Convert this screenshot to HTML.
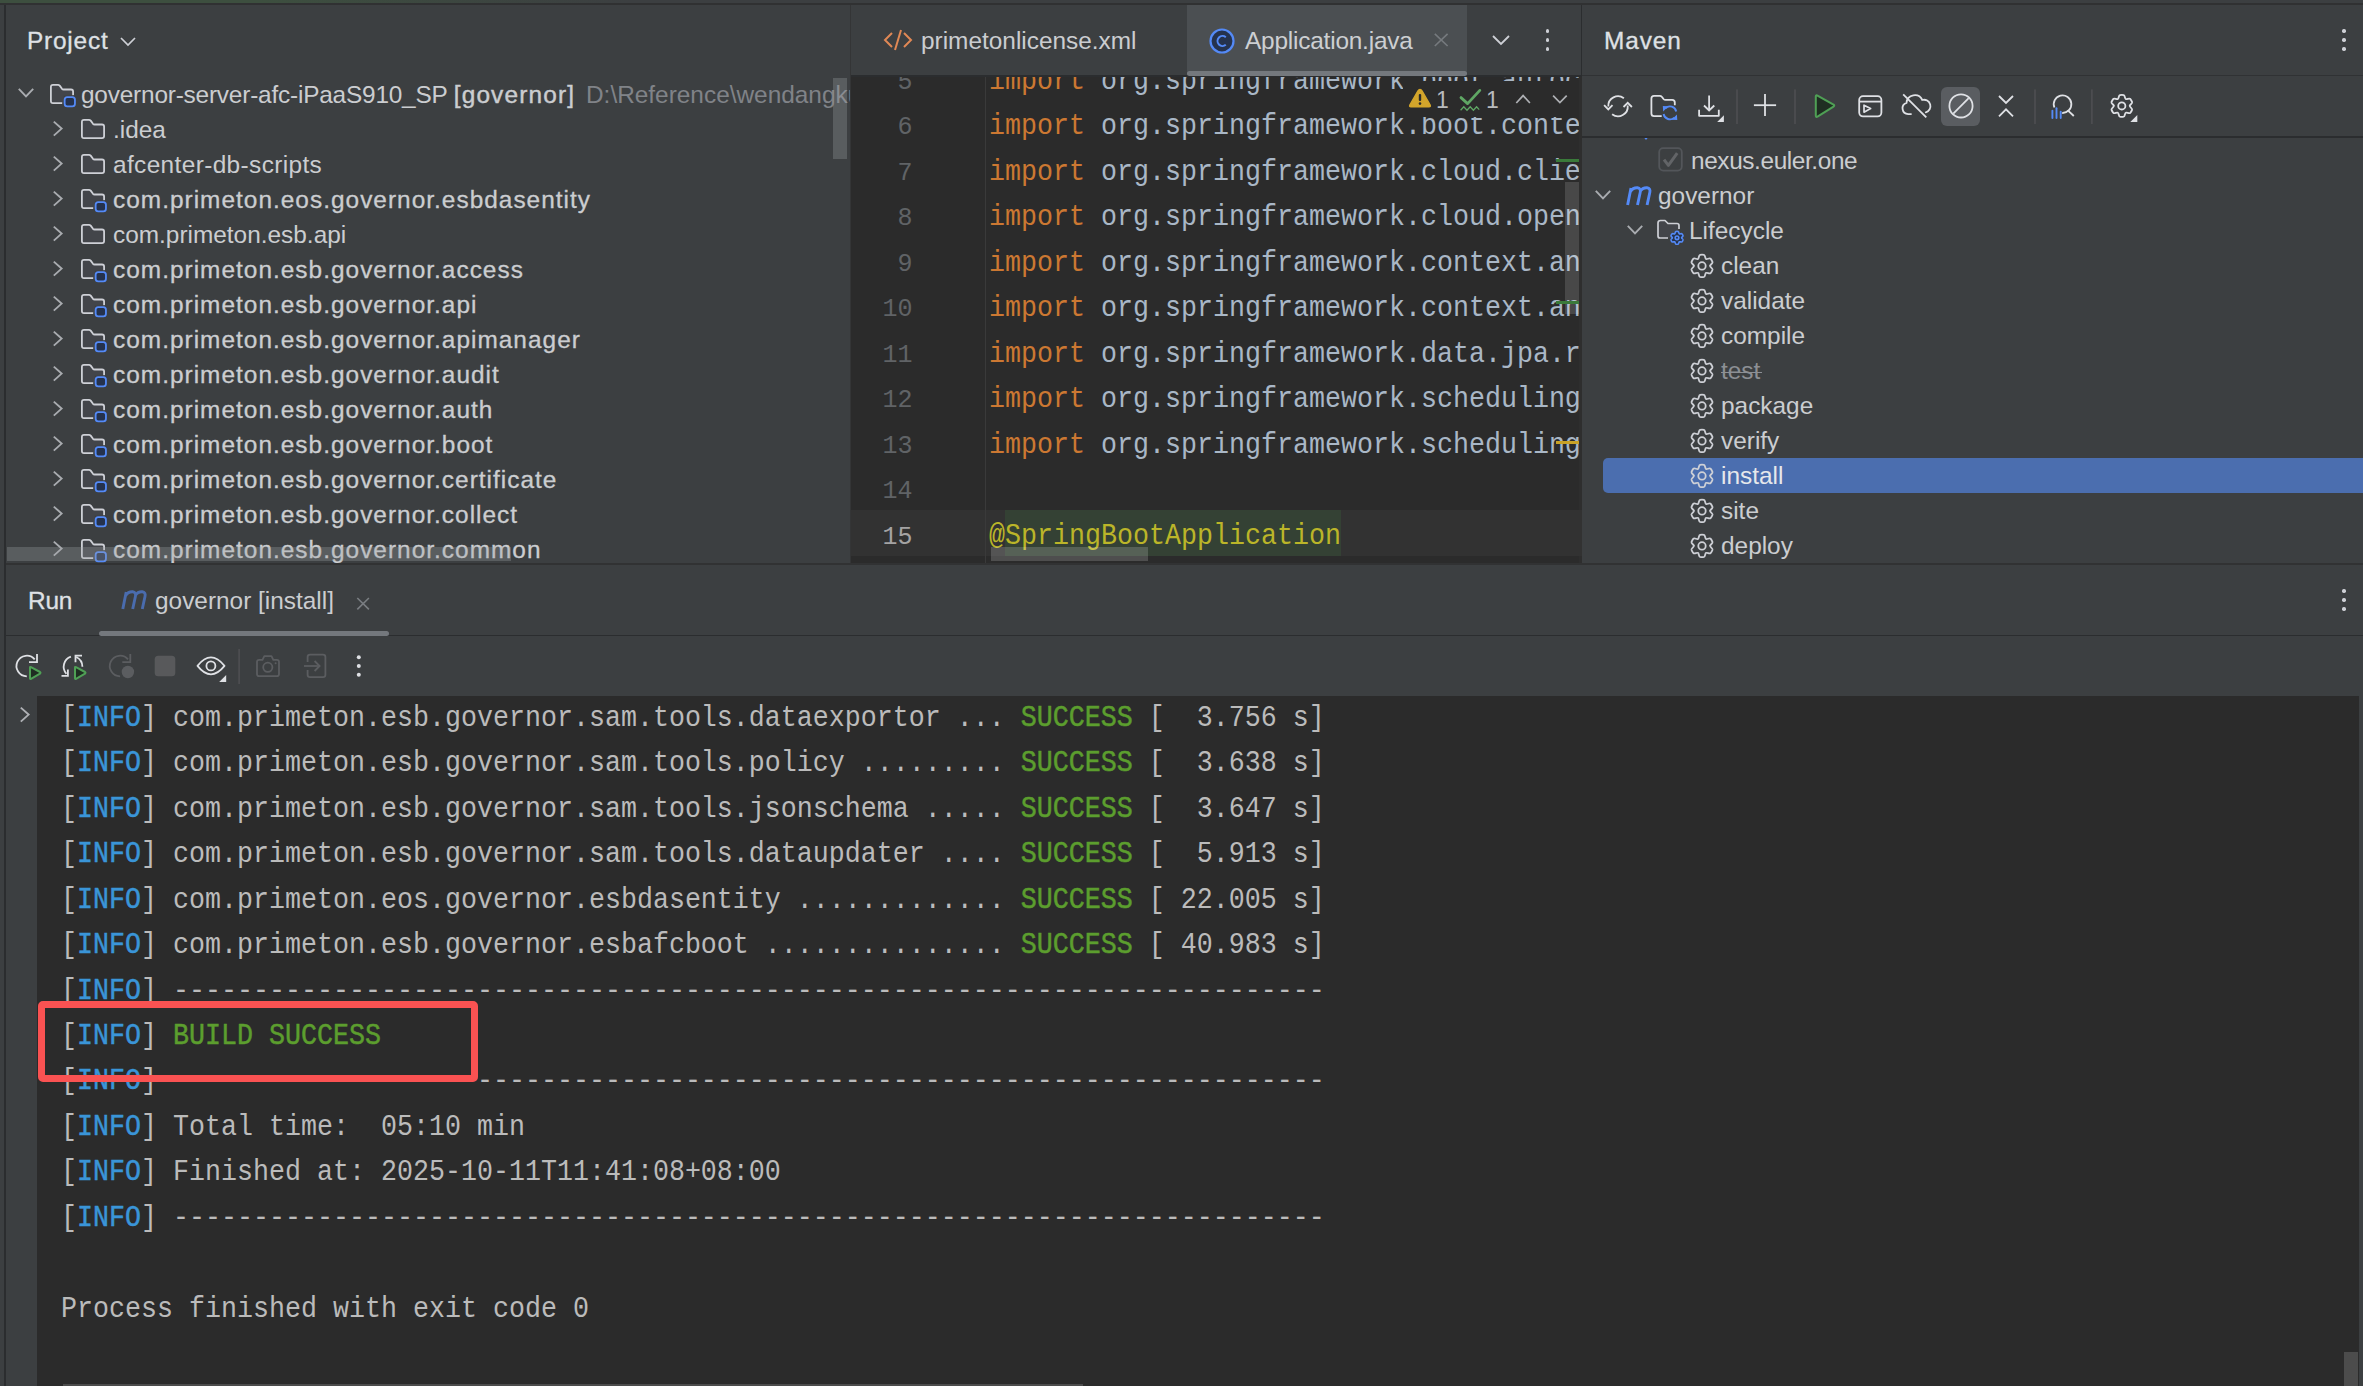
<!DOCTYPE html><html><head><meta charset="utf-8"><style>
html,body{margin:0;padding:0;}
body{width:2363px;height:1386px;overflow:hidden;position:relative;background:#3C3F41;font-family:'Liberation Sans', sans-serif;}
</style></head><body>
<div style="position:absolute;left:0px;top:0px;width:2363px;height:3px;background:#3C3F41;background:linear-gradient(to right, #3D4F3F 0px, #3D4F3F 260px, #3C3F41 630px);"></div>
<div style="position:absolute;left:0px;top:3px;width:2363px;height:1.6px;background:#303132;"></div>
<div style="position:absolute;left:4px;top:5px;width:2px;height:1381px;background:#2B2D2F;"></div>
<div style="position:absolute;left:27px;top:24.54px;line-height:32px;font-family:'Liberation Sans', sans-serif;font-size:24.4px;font-weight:400;color:#DFE1E5;white-space:pre;letter-spacing:0.8px;-webkit-text-stroke:0.3px #DFE1E5;">Project</div>
<svg style="position:absolute;left:118px;top:34px;" width="20" height="14" viewBox="0 0 20 14" fill="none"><polyline points="3,4 10,11 17,4" stroke="#CED0D6" stroke-width="1.7" fill="none"/></svg>
<div style="position:absolute;left:6px;top:77px;width:844px;height:486px;overflow:hidden;">
<svg style="position:absolute;left:10.5px;top:9px;" width="18" height="14" viewBox="0 0 18 14" fill="none"><polyline points="1.8,2.8 9,10.4 16.2,2.8" stroke="#A9ACB0" stroke-width="1.9" fill="none"/></svg>
<svg style="position:absolute;left:44px;top:7px;" width="28" height="26" viewBox="0 0 28 26" fill="none"><path d="M0.9,3 Q0.9,0.9 3,0.9 L8,0.9 Q9,0.9 9.7,1.6 L12,4.8 Q12.6,5.5 13.6,5.5 L21,5.5 Q23.1,5.5 23.1,7.6 L23.1,17 Q23.1,19.1 21,19.1 L3,19.1 Q0.9,19.1 0.9,17 Z" fill="#43454A"/><path d="M12.2,19.1 L3,19.1 Q0.9,19.1 0.9,17 L0.9,3 Q0.9,0.9 3,0.9 L8,0.9 Q9,0.9 9.7,1.6 L12,4.8 Q12.6,5.5 13.6,5.5 L21,5.5 Q23.1,5.5 23.1,7.6 L23.1,11.3" fill="none" stroke="#CED0D6" stroke-width="1.8" stroke-linejoin="round"/><rect x="13.8" y="11.6" width="11.6" height="11.2" fill="#3C3F41"/><rect x="14.65" y="13.05" width="10.3" height="9.4" rx="2.6" fill="#25324D" stroke="#548AF7" stroke-width="1.8"/></svg>
<div style="position:absolute;left:75px;top:1.54px;line-height:32px;font-family:'Liberation Sans', sans-serif;font-size:24.4px;font-weight:400;color:#CBCDD0;white-space:pre;"><span style="letter-spacing:-0.2px">governor-server-afc-iPaaS910_SP </span><span style="letter-spacing:1.15px;-webkit-text-stroke:0.45px #CBCDD0">[governor]</span></div>
<div style="position:absolute;left:580px;top:1.54px;line-height:32px;font-family:'Liberation Sans', sans-serif;font-size:24.4px;font-weight:400;color:#808388;white-space:pre;">D:\Reference\wendangku\governor</div>
<svg style="position:absolute;left:44.5px;top:42px;" width="14" height="20" viewBox="0 0 14 20" fill="none"><polyline points="2.8,2.6 10.6,9.6 2.8,16.6" stroke="#A9ACB0" stroke-width="1.9" fill="none"/></svg>
<svg style="position:absolute;left:75px;top:42px;" width="26" height="22" viewBox="0 0 26 22" fill="none"><path d="M0.9,3 Q0.9,0.9 3,0.9 L8,0.9 Q9,0.9 9.7,1.6 L12,4.8 Q12.6,5.5 13.6,5.5 L21,5.5 Q23.1,5.5 23.1,7.6 L23.1,17 Q23.1,19.1 21,19.1 L3,19.1 Q0.9,19.1 0.9,17 Z" fill="#43454A" stroke="#CED0D6" stroke-width="1.8" stroke-linejoin="round"/></svg>
<div style="position:absolute;left:107px;top:36.54px;line-height:32px;font-family:'Liberation Sans', sans-serif;font-size:24.4px;font-weight:400;color:#CBCDD0;white-space:pre;">.idea</div>
<svg style="position:absolute;left:44.5px;top:77px;" width="14" height="20" viewBox="0 0 14 20" fill="none"><polyline points="2.8,2.6 10.6,9.6 2.8,16.6" stroke="#A9ACB0" stroke-width="1.9" fill="none"/></svg>
<svg style="position:absolute;left:75px;top:77px;" width="26" height="22" viewBox="0 0 26 22" fill="none"><path d="M0.9,3 Q0.9,0.9 3,0.9 L8,0.9 Q9,0.9 9.7,1.6 L12,4.8 Q12.6,5.5 13.6,5.5 L21,5.5 Q23.1,5.5 23.1,7.6 L23.1,17 Q23.1,19.1 21,19.1 L3,19.1 Q0.9,19.1 0.9,17 Z" fill="#43454A" stroke="#CED0D6" stroke-width="1.8" stroke-linejoin="round"/></svg>
<div style="position:absolute;left:107px;top:71.54px;line-height:32px;font-family:'Liberation Sans', sans-serif;font-size:24.4px;font-weight:400;color:#CBCDD0;white-space:pre;letter-spacing:0.38px;">afcenter-db-scripts</div>
<svg style="position:absolute;left:44.5px;top:112px;" width="14" height="20" viewBox="0 0 14 20" fill="none"><polyline points="2.8,2.6 10.6,9.6 2.8,16.6" stroke="#A9ACB0" stroke-width="1.9" fill="none"/></svg>
<svg style="position:absolute;left:75px;top:112px;" width="28" height="26" viewBox="0 0 28 26" fill="none"><path d="M0.9,3 Q0.9,0.9 3,0.9 L8,0.9 Q9,0.9 9.7,1.6 L12,4.8 Q12.6,5.5 13.6,5.5 L21,5.5 Q23.1,5.5 23.1,7.6 L23.1,17 Q23.1,19.1 21,19.1 L3,19.1 Q0.9,19.1 0.9,17 Z" fill="#43454A"/><path d="M12.2,19.1 L3,19.1 Q0.9,19.1 0.9,17 L0.9,3 Q0.9,0.9 3,0.9 L8,0.9 Q9,0.9 9.7,1.6 L12,4.8 Q12.6,5.5 13.6,5.5 L21,5.5 Q23.1,5.5 23.1,7.6 L23.1,11.3" fill="none" stroke="#CED0D6" stroke-width="1.8" stroke-linejoin="round"/><rect x="13.8" y="11.6" width="11.6" height="11.2" fill="#3C3F41"/><rect x="14.65" y="13.05" width="10.3" height="9.4" rx="2.6" fill="#25324D" stroke="#548AF7" stroke-width="1.8"/></svg>
<div style="position:absolute;left:107px;top:106.54px;line-height:32px;font-family:'Liberation Sans', sans-serif;font-size:24.4px;font-weight:400;color:#CBCDD0;white-space:pre;letter-spacing:1.02px;-webkit-text-stroke:0.32px #CBCDD0;">com.primeton.eos.governor.esbdasentity</div>
<svg style="position:absolute;left:44.5px;top:147px;" width="14" height="20" viewBox="0 0 14 20" fill="none"><polyline points="2.8,2.6 10.6,9.6 2.8,16.6" stroke="#A9ACB0" stroke-width="1.9" fill="none"/></svg>
<svg style="position:absolute;left:75px;top:147px;" width="26" height="22" viewBox="0 0 26 22" fill="none"><path d="M0.9,3 Q0.9,0.9 3,0.9 L8,0.9 Q9,0.9 9.7,1.6 L12,4.8 Q12.6,5.5 13.6,5.5 L21,5.5 Q23.1,5.5 23.1,7.6 L23.1,17 Q23.1,19.1 21,19.1 L3,19.1 Q0.9,19.1 0.9,17 Z" fill="#43454A" stroke="#CED0D6" stroke-width="1.8" stroke-linejoin="round"/></svg>
<div style="position:absolute;left:107px;top:141.54px;line-height:32px;font-family:'Liberation Sans', sans-serif;font-size:24.4px;font-weight:400;color:#CBCDD0;white-space:pre;">com.primeton.esb.api</div>
<svg style="position:absolute;left:44.5px;top:182px;" width="14" height="20" viewBox="0 0 14 20" fill="none"><polyline points="2.8,2.6 10.6,9.6 2.8,16.6" stroke="#A9ACB0" stroke-width="1.9" fill="none"/></svg>
<svg style="position:absolute;left:75px;top:182px;" width="28" height="26" viewBox="0 0 28 26" fill="none"><path d="M0.9,3 Q0.9,0.9 3,0.9 L8,0.9 Q9,0.9 9.7,1.6 L12,4.8 Q12.6,5.5 13.6,5.5 L21,5.5 Q23.1,5.5 23.1,7.6 L23.1,17 Q23.1,19.1 21,19.1 L3,19.1 Q0.9,19.1 0.9,17 Z" fill="#43454A"/><path d="M12.2,19.1 L3,19.1 Q0.9,19.1 0.9,17 L0.9,3 Q0.9,0.9 3,0.9 L8,0.9 Q9,0.9 9.7,1.6 L12,4.8 Q12.6,5.5 13.6,5.5 L21,5.5 Q23.1,5.5 23.1,7.6 L23.1,11.3" fill="none" stroke="#CED0D6" stroke-width="1.8" stroke-linejoin="round"/><rect x="13.8" y="11.6" width="11.6" height="11.2" fill="#3C3F41"/><rect x="14.65" y="13.05" width="10.3" height="9.4" rx="2.6" fill="#25324D" stroke="#548AF7" stroke-width="1.8"/></svg>
<div style="position:absolute;left:107px;top:176.54px;line-height:32px;font-family:'Liberation Sans', sans-serif;font-size:24.4px;font-weight:400;color:#CBCDD0;white-space:pre;letter-spacing:1.02px;-webkit-text-stroke:0.32px #CBCDD0;">com.primeton.esb.governor.access</div>
<svg style="position:absolute;left:44.5px;top:217px;" width="14" height="20" viewBox="0 0 14 20" fill="none"><polyline points="2.8,2.6 10.6,9.6 2.8,16.6" stroke="#A9ACB0" stroke-width="1.9" fill="none"/></svg>
<svg style="position:absolute;left:75px;top:217px;" width="28" height="26" viewBox="0 0 28 26" fill="none"><path d="M0.9,3 Q0.9,0.9 3,0.9 L8,0.9 Q9,0.9 9.7,1.6 L12,4.8 Q12.6,5.5 13.6,5.5 L21,5.5 Q23.1,5.5 23.1,7.6 L23.1,17 Q23.1,19.1 21,19.1 L3,19.1 Q0.9,19.1 0.9,17 Z" fill="#43454A"/><path d="M12.2,19.1 L3,19.1 Q0.9,19.1 0.9,17 L0.9,3 Q0.9,0.9 3,0.9 L8,0.9 Q9,0.9 9.7,1.6 L12,4.8 Q12.6,5.5 13.6,5.5 L21,5.5 Q23.1,5.5 23.1,7.6 L23.1,11.3" fill="none" stroke="#CED0D6" stroke-width="1.8" stroke-linejoin="round"/><rect x="13.8" y="11.6" width="11.6" height="11.2" fill="#3C3F41"/><rect x="14.65" y="13.05" width="10.3" height="9.4" rx="2.6" fill="#25324D" stroke="#548AF7" stroke-width="1.8"/></svg>
<div style="position:absolute;left:107px;top:211.54px;line-height:32px;font-family:'Liberation Sans', sans-serif;font-size:24.4px;font-weight:400;color:#CBCDD0;white-space:pre;letter-spacing:1.02px;-webkit-text-stroke:0.32px #CBCDD0;">com.primeton.esb.governor.api</div>
<svg style="position:absolute;left:44.5px;top:252px;" width="14" height="20" viewBox="0 0 14 20" fill="none"><polyline points="2.8,2.6 10.6,9.6 2.8,16.6" stroke="#A9ACB0" stroke-width="1.9" fill="none"/></svg>
<svg style="position:absolute;left:75px;top:252px;" width="28" height="26" viewBox="0 0 28 26" fill="none"><path d="M0.9,3 Q0.9,0.9 3,0.9 L8,0.9 Q9,0.9 9.7,1.6 L12,4.8 Q12.6,5.5 13.6,5.5 L21,5.5 Q23.1,5.5 23.1,7.6 L23.1,17 Q23.1,19.1 21,19.1 L3,19.1 Q0.9,19.1 0.9,17 Z" fill="#43454A"/><path d="M12.2,19.1 L3,19.1 Q0.9,19.1 0.9,17 L0.9,3 Q0.9,0.9 3,0.9 L8,0.9 Q9,0.9 9.7,1.6 L12,4.8 Q12.6,5.5 13.6,5.5 L21,5.5 Q23.1,5.5 23.1,7.6 L23.1,11.3" fill="none" stroke="#CED0D6" stroke-width="1.8" stroke-linejoin="round"/><rect x="13.8" y="11.6" width="11.6" height="11.2" fill="#3C3F41"/><rect x="14.65" y="13.05" width="10.3" height="9.4" rx="2.6" fill="#25324D" stroke="#548AF7" stroke-width="1.8"/></svg>
<div style="position:absolute;left:107px;top:246.54px;line-height:32px;font-family:'Liberation Sans', sans-serif;font-size:24.4px;font-weight:400;color:#CBCDD0;white-space:pre;letter-spacing:1.02px;-webkit-text-stroke:0.32px #CBCDD0;">com.primeton.esb.governor.apimanager</div>
<svg style="position:absolute;left:44.5px;top:287px;" width="14" height="20" viewBox="0 0 14 20" fill="none"><polyline points="2.8,2.6 10.6,9.6 2.8,16.6" stroke="#A9ACB0" stroke-width="1.9" fill="none"/></svg>
<svg style="position:absolute;left:75px;top:287px;" width="28" height="26" viewBox="0 0 28 26" fill="none"><path d="M0.9,3 Q0.9,0.9 3,0.9 L8,0.9 Q9,0.9 9.7,1.6 L12,4.8 Q12.6,5.5 13.6,5.5 L21,5.5 Q23.1,5.5 23.1,7.6 L23.1,17 Q23.1,19.1 21,19.1 L3,19.1 Q0.9,19.1 0.9,17 Z" fill="#43454A"/><path d="M12.2,19.1 L3,19.1 Q0.9,19.1 0.9,17 L0.9,3 Q0.9,0.9 3,0.9 L8,0.9 Q9,0.9 9.7,1.6 L12,4.8 Q12.6,5.5 13.6,5.5 L21,5.5 Q23.1,5.5 23.1,7.6 L23.1,11.3" fill="none" stroke="#CED0D6" stroke-width="1.8" stroke-linejoin="round"/><rect x="13.8" y="11.6" width="11.6" height="11.2" fill="#3C3F41"/><rect x="14.65" y="13.05" width="10.3" height="9.4" rx="2.6" fill="#25324D" stroke="#548AF7" stroke-width="1.8"/></svg>
<div style="position:absolute;left:107px;top:281.54px;line-height:32px;font-family:'Liberation Sans', sans-serif;font-size:24.4px;font-weight:400;color:#CBCDD0;white-space:pre;letter-spacing:1.02px;-webkit-text-stroke:0.32px #CBCDD0;">com.primeton.esb.governor.audit</div>
<svg style="position:absolute;left:44.5px;top:322px;" width="14" height="20" viewBox="0 0 14 20" fill="none"><polyline points="2.8,2.6 10.6,9.6 2.8,16.6" stroke="#A9ACB0" stroke-width="1.9" fill="none"/></svg>
<svg style="position:absolute;left:75px;top:322px;" width="28" height="26" viewBox="0 0 28 26" fill="none"><path d="M0.9,3 Q0.9,0.9 3,0.9 L8,0.9 Q9,0.9 9.7,1.6 L12,4.8 Q12.6,5.5 13.6,5.5 L21,5.5 Q23.1,5.5 23.1,7.6 L23.1,17 Q23.1,19.1 21,19.1 L3,19.1 Q0.9,19.1 0.9,17 Z" fill="#43454A"/><path d="M12.2,19.1 L3,19.1 Q0.9,19.1 0.9,17 L0.9,3 Q0.9,0.9 3,0.9 L8,0.9 Q9,0.9 9.7,1.6 L12,4.8 Q12.6,5.5 13.6,5.5 L21,5.5 Q23.1,5.5 23.1,7.6 L23.1,11.3" fill="none" stroke="#CED0D6" stroke-width="1.8" stroke-linejoin="round"/><rect x="13.8" y="11.6" width="11.6" height="11.2" fill="#3C3F41"/><rect x="14.65" y="13.05" width="10.3" height="9.4" rx="2.6" fill="#25324D" stroke="#548AF7" stroke-width="1.8"/></svg>
<div style="position:absolute;left:107px;top:316.54px;line-height:32px;font-family:'Liberation Sans', sans-serif;font-size:24.4px;font-weight:400;color:#CBCDD0;white-space:pre;letter-spacing:1.02px;-webkit-text-stroke:0.32px #CBCDD0;">com.primeton.esb.governor.auth</div>
<svg style="position:absolute;left:44.5px;top:357px;" width="14" height="20" viewBox="0 0 14 20" fill="none"><polyline points="2.8,2.6 10.6,9.6 2.8,16.6" stroke="#A9ACB0" stroke-width="1.9" fill="none"/></svg>
<svg style="position:absolute;left:75px;top:357px;" width="28" height="26" viewBox="0 0 28 26" fill="none"><path d="M0.9,3 Q0.9,0.9 3,0.9 L8,0.9 Q9,0.9 9.7,1.6 L12,4.8 Q12.6,5.5 13.6,5.5 L21,5.5 Q23.1,5.5 23.1,7.6 L23.1,17 Q23.1,19.1 21,19.1 L3,19.1 Q0.9,19.1 0.9,17 Z" fill="#43454A"/><path d="M12.2,19.1 L3,19.1 Q0.9,19.1 0.9,17 L0.9,3 Q0.9,0.9 3,0.9 L8,0.9 Q9,0.9 9.7,1.6 L12,4.8 Q12.6,5.5 13.6,5.5 L21,5.5 Q23.1,5.5 23.1,7.6 L23.1,11.3" fill="none" stroke="#CED0D6" stroke-width="1.8" stroke-linejoin="round"/><rect x="13.8" y="11.6" width="11.6" height="11.2" fill="#3C3F41"/><rect x="14.65" y="13.05" width="10.3" height="9.4" rx="2.6" fill="#25324D" stroke="#548AF7" stroke-width="1.8"/></svg>
<div style="position:absolute;left:107px;top:351.54px;line-height:32px;font-family:'Liberation Sans', sans-serif;font-size:24.4px;font-weight:400;color:#CBCDD0;white-space:pre;letter-spacing:1.02px;-webkit-text-stroke:0.32px #CBCDD0;">com.primeton.esb.governor.boot</div>
<svg style="position:absolute;left:44.5px;top:392px;" width="14" height="20" viewBox="0 0 14 20" fill="none"><polyline points="2.8,2.6 10.6,9.6 2.8,16.6" stroke="#A9ACB0" stroke-width="1.9" fill="none"/></svg>
<svg style="position:absolute;left:75px;top:392px;" width="28" height="26" viewBox="0 0 28 26" fill="none"><path d="M0.9,3 Q0.9,0.9 3,0.9 L8,0.9 Q9,0.9 9.7,1.6 L12,4.8 Q12.6,5.5 13.6,5.5 L21,5.5 Q23.1,5.5 23.1,7.6 L23.1,17 Q23.1,19.1 21,19.1 L3,19.1 Q0.9,19.1 0.9,17 Z" fill="#43454A"/><path d="M12.2,19.1 L3,19.1 Q0.9,19.1 0.9,17 L0.9,3 Q0.9,0.9 3,0.9 L8,0.9 Q9,0.9 9.7,1.6 L12,4.8 Q12.6,5.5 13.6,5.5 L21,5.5 Q23.1,5.5 23.1,7.6 L23.1,11.3" fill="none" stroke="#CED0D6" stroke-width="1.8" stroke-linejoin="round"/><rect x="13.8" y="11.6" width="11.6" height="11.2" fill="#3C3F41"/><rect x="14.65" y="13.05" width="10.3" height="9.4" rx="2.6" fill="#25324D" stroke="#548AF7" stroke-width="1.8"/></svg>
<div style="position:absolute;left:107px;top:386.54px;line-height:32px;font-family:'Liberation Sans', sans-serif;font-size:24.4px;font-weight:400;color:#CBCDD0;white-space:pre;letter-spacing:1.02px;-webkit-text-stroke:0.32px #CBCDD0;">com.primeton.esb.governor.certificate</div>
<svg style="position:absolute;left:44.5px;top:427px;" width="14" height="20" viewBox="0 0 14 20" fill="none"><polyline points="2.8,2.6 10.6,9.6 2.8,16.6" stroke="#A9ACB0" stroke-width="1.9" fill="none"/></svg>
<svg style="position:absolute;left:75px;top:427px;" width="28" height="26" viewBox="0 0 28 26" fill="none"><path d="M0.9,3 Q0.9,0.9 3,0.9 L8,0.9 Q9,0.9 9.7,1.6 L12,4.8 Q12.6,5.5 13.6,5.5 L21,5.5 Q23.1,5.5 23.1,7.6 L23.1,17 Q23.1,19.1 21,19.1 L3,19.1 Q0.9,19.1 0.9,17 Z" fill="#43454A"/><path d="M12.2,19.1 L3,19.1 Q0.9,19.1 0.9,17 L0.9,3 Q0.9,0.9 3,0.9 L8,0.9 Q9,0.9 9.7,1.6 L12,4.8 Q12.6,5.5 13.6,5.5 L21,5.5 Q23.1,5.5 23.1,7.6 L23.1,11.3" fill="none" stroke="#CED0D6" stroke-width="1.8" stroke-linejoin="round"/><rect x="13.8" y="11.6" width="11.6" height="11.2" fill="#3C3F41"/><rect x="14.65" y="13.05" width="10.3" height="9.4" rx="2.6" fill="#25324D" stroke="#548AF7" stroke-width="1.8"/></svg>
<div style="position:absolute;left:107px;top:421.54px;line-height:32px;font-family:'Liberation Sans', sans-serif;font-size:24.4px;font-weight:400;color:#CBCDD0;white-space:pre;letter-spacing:1.02px;-webkit-text-stroke:0.32px #CBCDD0;">com.primeton.esb.governor.collect</div>
<svg style="position:absolute;left:44.5px;top:462px;" width="14" height="20" viewBox="0 0 14 20" fill="none"><polyline points="2.8,2.6 10.6,9.6 2.8,16.6" stroke="#A9ACB0" stroke-width="1.9" fill="none"/></svg>
<svg style="position:absolute;left:75px;top:462px;" width="28" height="26" viewBox="0 0 28 26" fill="none"><path d="M0.9,3 Q0.9,0.9 3,0.9 L8,0.9 Q9,0.9 9.7,1.6 L12,4.8 Q12.6,5.5 13.6,5.5 L21,5.5 Q23.1,5.5 23.1,7.6 L23.1,17 Q23.1,19.1 21,19.1 L3,19.1 Q0.9,19.1 0.9,17 Z" fill="#43454A"/><path d="M12.2,19.1 L3,19.1 Q0.9,19.1 0.9,17 L0.9,3 Q0.9,0.9 3,0.9 L8,0.9 Q9,0.9 9.7,1.6 L12,4.8 Q12.6,5.5 13.6,5.5 L21,5.5 Q23.1,5.5 23.1,7.6 L23.1,11.3" fill="none" stroke="#CED0D6" stroke-width="1.8" stroke-linejoin="round"/><rect x="13.8" y="11.6" width="11.6" height="11.2" fill="#3C3F41"/><rect x="14.65" y="13.05" width="10.3" height="9.4" rx="2.6" fill="#25324D" stroke="#548AF7" stroke-width="1.8"/></svg>
<div style="position:absolute;left:107px;top:456.54px;line-height:32px;font-family:'Liberation Sans', sans-serif;font-size:24.4px;font-weight:400;color:#CBCDD0;white-space:pre;letter-spacing:1.02px;-webkit-text-stroke:0.32px #CBCDD0;">com.primeton.esb.governor.common</div>
</div>
<div style="position:absolute;left:833px;top:78px;width:14px;height:81px;background:rgba(160,162,165,0.3);"></div>
<div style="position:absolute;left:7px;top:547px;width:504px;height:14px;background:rgba(160,162,165,0.3);"></div>
<div style="position:absolute;left:850px;top:5px;width:1px;height:558px;background:#343536;"></div>
<div style="position:absolute;left:851px;top:5px;width:730px;height:70px;background:#3C3F41;"></div>
<div style="position:absolute;left:1187px;top:5px;width:280px;height:70px;background:#4B4F52;"></div>
<div style="position:absolute;left:851px;top:75px;width:730px;height:2px;background:#2B2D2F;"></div>
<div style="position:absolute;left:1187px;top:71px;width:280px;height:5px;background:#74787D;border-radius:2.5px;"></div>
<svg style="position:absolute;left:882px;top:27px;" width="32" height="26" viewBox="0 0 32 26" fill="none"><polyline points="10,6 3,13 10,20" stroke="#E08855" stroke-width="2" fill="none"/><line x1="19" y1="3" x2="13" y2="23" stroke="#E08855" stroke-width="2"/><polyline points="22,6 29,13 22,20" stroke="#E08855" stroke-width="2" fill="none"/></svg>
<div style="position:absolute;left:921px;top:24.54px;line-height:32px;font-family:'Liberation Sans', sans-serif;font-size:24.4px;font-weight:400;color:#CBCDD0;white-space:pre;">primetonlicense.xml</div>
<svg style="position:absolute;left:1207px;top:26px;" width="30" height="30" viewBox="0 0 30 30" fill="none"><circle cx="15" cy="15" r="11.5" stroke="#548AF7" stroke-width="2.2" fill="#25324D"/><path d="M18.8,11.2 A5,5 0 1 0 18.8,18.8" stroke="#548AF7" stroke-width="2" fill="none"/></svg>
<div style="position:absolute;left:1245px;top:24.54px;line-height:32px;font-family:'Liberation Sans', sans-serif;font-size:24.4px;font-weight:400;color:#CDCFD2;white-space:pre;letter-spacing:-0.2px;">Application.java</div>
<svg style="position:absolute;left:1490px;top:32px;" width="22" height="16" viewBox="0 0 22 16" fill="none"><polyline points="3,4 11,12 19,4" stroke="#CED0D6" stroke-width="1.8" fill="none"/></svg>
<div style="position:absolute;left:1545.5px;top:29.3px;width:3.4px;height:3.4px;background:#CED0D6;border-radius:50%;"></div>
<div style="position:absolute;left:1545.5px;top:38.3px;width:3.4px;height:3.4px;background:#CED0D6;border-radius:50%;"></div>
<div style="position:absolute;left:1545.5px;top:47.3px;width:3.4px;height:3.4px;background:#CED0D6;border-radius:50%;"></div>
<div style="position:absolute;left:851px;top:77px;width:731px;height:486px;background:#2B2B2B;"></div>
<div style="position:absolute;left:851px;top:77px;width:728px;height:486px;overflow:hidden;">
<div style="position:absolute;left:0px;top:433px;width:730px;height:46px;background:#323232;"></div>
<div style="position:absolute;left:154px;top:433px;width:336px;height:46px;background:#344134;"></div>
<div style="position:absolute;left:46.5px;top:-10.15px;line-height:32px;font-family:'Liberation Mono', monospace;font-size:25px;font-weight:400;color:#606366;white-space:pre;transform:scaleY(1.0);transform-origin:0 22.65px;">5</div>
<div style="position:absolute;left:138px;top:-12.10px;line-height:35px;font-family:'Liberation Mono', monospace;font-size:26.67px;font-weight:400;color:#A9B7C6;white-space:pre;transform:scaleY(1.12);transform-origin:0 24.60px;"><span style="color:#CC7832">import</span> org.springframework.boot.autoconfigure.SpringBootApplication;</div>
<div style="position:absolute;left:46.5px;top:35.35px;line-height:32px;font-family:'Liberation Mono', monospace;font-size:25px;font-weight:400;color:#606366;white-space:pre;transform:scaleY(1.0);transform-origin:0 22.65px;">6</div>
<div style="position:absolute;left:138px;top:33.40px;line-height:35px;font-family:'Liberation Mono', monospace;font-size:26.67px;font-weight:400;color:#A9B7C6;white-space:pre;transform:scaleY(1.12);transform-origin:0 24.60px;"><span style="color:#CC7832">import</span> org.springframework.boot.context.properties.EnableConfigurationProperties;</div>
<div style="position:absolute;left:46.5px;top:80.85px;line-height:32px;font-family:'Liberation Mono', monospace;font-size:25px;font-weight:400;color:#606366;white-space:pre;transform:scaleY(1.0);transform-origin:0 22.65px;">7</div>
<div style="position:absolute;left:138px;top:78.90px;line-height:35px;font-family:'Liberation Mono', monospace;font-size:26.67px;font-weight:400;color:#A9B7C6;white-space:pre;transform:scaleY(1.12);transform-origin:0 24.60px;"><span style="color:#CC7832">import</span> org.springframework.cloud.client.discovery.EnableDiscoveryClient;</div>
<div style="position:absolute;left:46.5px;top:126.35px;line-height:32px;font-family:'Liberation Mono', monospace;font-size:25px;font-weight:400;color:#606366;white-space:pre;transform:scaleY(1.0);transform-origin:0 22.65px;">8</div>
<div style="position:absolute;left:138px;top:124.40px;line-height:35px;font-family:'Liberation Mono', monospace;font-size:26.67px;font-weight:400;color:#A9B7C6;white-space:pre;transform:scaleY(1.12);transform-origin:0 24.60px;"><span style="color:#CC7832">import</span> org.springframework.cloud.openfeign.EnableFeignClients;</div>
<div style="position:absolute;left:46.5px;top:171.85px;line-height:32px;font-family:'Liberation Mono', monospace;font-size:25px;font-weight:400;color:#606366;white-space:pre;transform:scaleY(1.0);transform-origin:0 22.65px;">9</div>
<div style="position:absolute;left:138px;top:169.90px;line-height:35px;font-family:'Liberation Mono', monospace;font-size:26.67px;font-weight:400;color:#A9B7C6;white-space:pre;transform:scaleY(1.12);transform-origin:0 24.60px;"><span style="color:#CC7832">import</span> org.springframework.context.annotation.ComponentScan;</div>
<div style="position:absolute;left:31.5px;top:217.35px;line-height:32px;font-family:'Liberation Mono', monospace;font-size:25px;font-weight:400;color:#606366;white-space:pre;transform:scaleY(1.0);transform-origin:0 22.65px;">10</div>
<div style="position:absolute;left:138px;top:215.40px;line-height:35px;font-family:'Liberation Mono', monospace;font-size:26.67px;font-weight:400;color:#A9B7C6;white-space:pre;transform:scaleY(1.12);transform-origin:0 24.60px;"><span style="color:#CC7832">import</span> org.springframework.context.annotation.EnableAspectJAutoProxy;</div>
<div style="position:absolute;left:31.5px;top:262.85px;line-height:32px;font-family:'Liberation Mono', monospace;font-size:25px;font-weight:400;color:#606366;white-space:pre;transform:scaleY(1.0);transform-origin:0 22.65px;">11</div>
<div style="position:absolute;left:138px;top:260.90px;line-height:35px;font-family:'Liberation Mono', monospace;font-size:26.67px;font-weight:400;color:#A9B7C6;white-space:pre;transform:scaleY(1.12);transform-origin:0 24.60px;"><span style="color:#CC7832">import</span> org.springframework.data.jpa.repository.config.EnableJpaRepositories;</div>
<div style="position:absolute;left:31.5px;top:308.35px;line-height:32px;font-family:'Liberation Mono', monospace;font-size:25px;font-weight:400;color:#606366;white-space:pre;transform:scaleY(1.0);transform-origin:0 22.65px;">12</div>
<div style="position:absolute;left:138px;top:306.40px;line-height:35px;font-family:'Liberation Mono', monospace;font-size:26.67px;font-weight:400;color:#A9B7C6;white-space:pre;transform:scaleY(1.12);transform-origin:0 24.60px;"><span style="color:#CC7832">import</span> org.springframework.scheduling.annotation.EnableAsync;</div>
<div style="position:absolute;left:31.5px;top:353.85px;line-height:32px;font-family:'Liberation Mono', monospace;font-size:25px;font-weight:400;color:#606366;white-space:pre;transform:scaleY(1.0);transform-origin:0 22.65px;">13</div>
<div style="position:absolute;left:138px;top:351.90px;line-height:35px;font-family:'Liberation Mono', monospace;font-size:26.67px;font-weight:400;color:#A9B7C6;white-space:pre;transform:scaleY(1.12);transform-origin:0 24.60px;"><span style="color:#CC7832">import</span> org.springframework.scheduling.annotation.EnableScheduling;</div>
<div style="position:absolute;left:31.5px;top:399.35px;line-height:32px;font-family:'Liberation Mono', monospace;font-size:25px;font-weight:400;color:#606366;white-space:pre;transform:scaleY(1.0);transform-origin:0 22.65px;">14</div>
<div style="position:absolute;left:31.5px;top:444.85px;line-height:32px;font-family:'Liberation Mono', monospace;font-size:25px;font-weight:400;color:#A4A3A3;white-space:pre;transform:scaleY(1.0);transform-origin:0 22.65px;">15</div>
<div style="position:absolute;left:138px;top:442.90px;line-height:35px;font-family:'Liberation Mono', monospace;font-size:26.67px;font-weight:400;color:#BBB529;white-space:pre;transform:scaleY(1.12);transform-origin:0 24.60px;">@SpringBootApplication</div>
<div style="position:absolute;left:134px;top:0px;width:1px;height:486px;background:#3A3A3A;"></div>
</div>
<div style="position:absolute;left:1403px;top:80.5px;width:176px;height:36px;background:#2B2B2B;"></div>
<div style="position:absolute;left:1436px;top:85.03px;line-height:30px;font-family:'Liberation Sans', sans-serif;font-size:23px;font-weight:400;color:#B9BBBE;white-space:pre;">1</div>
<div style="position:absolute;left:1486px;top:85.03px;line-height:30px;font-family:'Liberation Sans', sans-serif;font-size:23px;font-weight:400;color:#B9BBBE;white-space:pre;">1</div>
<div style="position:absolute;left:1565px;top:182px;width:14px;height:132px;background:rgba(255,255,255,0.14);"></div>
<div style="position:absolute;left:1556px;top:159px;width:24px;height:3px;background:#3A7A3A;"></div>
<div style="position:absolute;left:1556px;top:301px;width:24px;height:3px;background:#3A7A3A;"></div>
<div style="position:absolute;left:1556px;top:441px;width:24px;height:3px;background:#C9A227;"></div>
<div style="position:absolute;left:991px;top:547px;width:157px;height:14px;background:rgba(255,255,255,0.17);"></div>
<div style="position:absolute;left:1579px;top:77px;width:3px;height:486px;background:#2E2E2E;"></div>
<div style="position:absolute;left:1579px;top:510px;width:3px;height:46px;background:#323232;"></div>
<div style="position:absolute;left:1581px;top:5px;width:1px;height:72px;background:#2B2D2F;"></div>
<div style="position:absolute;left:1604px;top:24.54px;line-height:32px;font-family:'Liberation Sans', sans-serif;font-size:24.4px;font-weight:400;color:#DFE1E5;white-space:pre;letter-spacing:0.9px;-webkit-text-stroke:0.3px #DFE1E5;">Maven</div>
<div style="position:absolute;left:2342.3px;top:29.3px;width:3.4px;height:3.4px;background:#CED0D6;border-radius:50%;"></div>
<div style="position:absolute;left:2342.3px;top:38.3px;width:3.4px;height:3.4px;background:#CED0D6;border-radius:50%;"></div>
<div style="position:absolute;left:2342.3px;top:47.3px;width:3.4px;height:3.4px;background:#CED0D6;border-radius:50%;"></div>
<div style="position:absolute;left:1582px;top:74.5px;width:781px;height:1.5px;background:#303234;"></div>
<div style="position:absolute;left:1582px;top:136px;width:781px;height:2px;background:#2B2D2F;"></div>
<div style="position:absolute;left:1941px;top:87px;width:39px;height:39px;background:#5A5D61;border-radius:6px;"></div>
<div style="position:absolute;left:1582px;top:138px;width:781px;height:425px;overflow:hidden;">
<svg style="position:absolute;left:59px;top:-4px;" width="10" height="8" viewBox="0 0 10 8" fill="none"><polygon points="1,1 9,1 5,6" fill="#548AF7"/></svg>
<svg style="position:absolute;left:74px;top:8px;" width="30" height="28" viewBox="0 0 30 28" fill="none"><rect x="3.2" y="2.2" width="22.6" height="22.4" rx="4" stroke="#53565A" stroke-width="1.8" fill="none"/><polyline points="8,13.6 12.4,19.4 21.2,7.2" stroke="#626467" stroke-width="3" fill="none" stroke-linejoin="round"/></svg>
<div style="position:absolute;left:109px;top:6.54px;line-height:32px;font-family:'Liberation Sans', sans-serif;font-size:24.4px;font-weight:400;color:#CBCDD0;white-space:pre;letter-spacing:-0.4px;">nexus.euler.one</div>
<svg style="position:absolute;left:11.599999999999909px;top:49.8px;" width="18" height="14" viewBox="0 0 18 14" fill="none"><polyline points="1.8,2.8 9,10.4 16.2,2.8" stroke="#A9ACB0" stroke-width="1.9" fill="none"/></svg>
</div>
<div style="position:absolute;left:1582px;top:138px;width:781px;height:425px;overflow:hidden;">
<div style="position:absolute;left:76px;top:41.54px;line-height:32px;font-family:'Liberation Sans', sans-serif;font-size:24.4px;font-weight:400;color:#CBCDD0;white-space:pre;">governor</div>
<svg style="position:absolute;left:43.59999999999991px;top:84.8px;" width="18" height="14" viewBox="0 0 18 14" fill="none"><polyline points="1.8,2.8 9,10.4 16.2,2.8" stroke="#A9ACB0" stroke-width="1.9" fill="none"/></svg>
<svg style="position:absolute;left:73px;top:80px;" width="34" height="30" viewBox="0 0 34 30" fill="none"><path d="M13,20 L5,20 Q3,20 3,18 L3,5 Q3,2.5 5.5,2.5 L10,2.5 L13,5.5 L22,5.5 Q24,5.5 24,7.5 L24,11" fill="#43454A" stroke="#CED0D6" stroke-width="1.7" stroke-linejoin="round"/><path d="M13,11 L24,11 L24,20 L13,20 Z" fill="#43454A"/><path d="M20.89,13.50 A6.40,6.40 0 0 1 23.11,13.50 C23.87,13.68 23.73,15.53 24.30,15.81 C24.84,16.17 26.36,15.12 26.90,15.69 A6.40,6.40 0 0 1 28.01,17.61 C28.24,18.36 26.56,19.16 26.61,19.80 C26.56,20.44 28.24,21.24 28.01,21.99 A6.40,6.40 0 0 1 26.90,23.91 C26.36,24.48 24.84,23.43 24.30,23.79 C23.73,24.07 23.87,25.92 23.11,26.10 A6.40,6.40 0 0 1 20.89,26.10 C20.13,25.92 20.27,24.07 19.70,23.79 C19.16,23.43 17.64,24.48 17.10,23.91 A6.40,6.40 0 0 1 15.99,21.99 C15.76,21.24 17.44,20.44 17.39,19.80 C17.44,19.16 15.76,18.36 15.99,17.61 A6.40,6.40 0 0 1 17.10,15.69 C17.64,15.12 19.16,16.17 19.70,15.81 C20.27,15.53 20.13,13.68 20.89,13.50 Z" stroke="#548AF7" stroke-width="1.6" stroke-linejoin="round" fill="#25324D"/><circle cx="22" cy="19.8" r="1.80" stroke="#548AF7" stroke-width="1.6" fill="none"/></svg>
<div style="position:absolute;left:107px;top:76.54px;line-height:32px;font-family:'Liberation Sans', sans-serif;font-size:24.4px;font-weight:400;color:#CBCDD0;white-space:pre;">Lifecycle</div>
<svg style="position:absolute;left:106px;top:113px;" width="28" height="30" viewBox="0 0 28 30" fill="none"><path d="M12.06,3.87 A11.20,11.20 0 0 1 15.94,3.87 C17.27,4.19 17.02,7.42 18.03,7.92 C18.96,8.55 21.64,6.71 22.58,7.70 A11.20,11.20 0 0 1 24.52,11.07 C24.91,12.38 21.99,13.78 22.06,14.90 C21.99,16.02 24.91,17.42 24.52,18.73 A11.20,11.20 0 0 1 22.58,22.10 C21.64,23.09 18.96,21.25 18.03,21.88 C17.02,22.38 17.27,25.61 15.94,25.93 A11.20,11.20 0 0 1 12.06,25.93 C10.73,25.61 10.98,22.38 9.97,21.88 C9.04,21.25 6.36,23.09 5.42,22.10 A11.20,11.20 0 0 1 3.48,18.73 C3.09,17.42 6.01,16.02 5.94,14.90 C6.01,13.78 3.09,12.38 3.48,11.07 A11.20,11.20 0 0 1 5.42,7.70 C6.36,6.71 9.04,8.55 9.97,7.92 C10.98,7.42 10.73,4.19 12.06,3.87 Z" stroke="#CED0D6" stroke-width="1.8" stroke-linejoin="round" fill="none"/><circle cx="14" cy="14.9" r="3.70" stroke="#CED0D6" stroke-width="1.8" fill="none"/></svg>
<div style="position:absolute;left:139px;top:111.54px;line-height:32px;font-family:'Liberation Sans', sans-serif;font-size:24.4px;font-weight:400;color:#CBCDD0;white-space:pre;">clean</div>
<svg style="position:absolute;left:106px;top:148px;" width="28" height="30" viewBox="0 0 28 30" fill="none"><path d="M12.06,3.87 A11.20,11.20 0 0 1 15.94,3.87 C17.27,4.19 17.02,7.42 18.03,7.92 C18.96,8.55 21.64,6.71 22.58,7.70 A11.20,11.20 0 0 1 24.52,11.07 C24.91,12.38 21.99,13.78 22.06,14.90 C21.99,16.02 24.91,17.42 24.52,18.73 A11.20,11.20 0 0 1 22.58,22.10 C21.64,23.09 18.96,21.25 18.03,21.88 C17.02,22.38 17.27,25.61 15.94,25.93 A11.20,11.20 0 0 1 12.06,25.93 C10.73,25.61 10.98,22.38 9.97,21.88 C9.04,21.25 6.36,23.09 5.42,22.10 A11.20,11.20 0 0 1 3.48,18.73 C3.09,17.42 6.01,16.02 5.94,14.90 C6.01,13.78 3.09,12.38 3.48,11.07 A11.20,11.20 0 0 1 5.42,7.70 C6.36,6.71 9.04,8.55 9.97,7.92 C10.98,7.42 10.73,4.19 12.06,3.87 Z" stroke="#CED0D6" stroke-width="1.8" stroke-linejoin="round" fill="none"/><circle cx="14" cy="14.9" r="3.70" stroke="#CED0D6" stroke-width="1.8" fill="none"/></svg>
<div style="position:absolute;left:139px;top:146.54px;line-height:32px;font-family:'Liberation Sans', sans-serif;font-size:24.4px;font-weight:400;color:#CBCDD0;white-space:pre;">validate</div>
<svg style="position:absolute;left:106px;top:183px;" width="28" height="30" viewBox="0 0 28 30" fill="none"><path d="M12.06,3.87 A11.20,11.20 0 0 1 15.94,3.87 C17.27,4.19 17.02,7.42 18.03,7.92 C18.96,8.55 21.64,6.71 22.58,7.70 A11.20,11.20 0 0 1 24.52,11.07 C24.91,12.38 21.99,13.78 22.06,14.90 C21.99,16.02 24.91,17.42 24.52,18.73 A11.20,11.20 0 0 1 22.58,22.10 C21.64,23.09 18.96,21.25 18.03,21.88 C17.02,22.38 17.27,25.61 15.94,25.93 A11.20,11.20 0 0 1 12.06,25.93 C10.73,25.61 10.98,22.38 9.97,21.88 C9.04,21.25 6.36,23.09 5.42,22.10 A11.20,11.20 0 0 1 3.48,18.73 C3.09,17.42 6.01,16.02 5.94,14.90 C6.01,13.78 3.09,12.38 3.48,11.07 A11.20,11.20 0 0 1 5.42,7.70 C6.36,6.71 9.04,8.55 9.97,7.92 C10.98,7.42 10.73,4.19 12.06,3.87 Z" stroke="#CED0D6" stroke-width="1.8" stroke-linejoin="round" fill="none"/><circle cx="14" cy="14.9" r="3.70" stroke="#CED0D6" stroke-width="1.8" fill="none"/></svg>
<div style="position:absolute;left:139px;top:181.54px;line-height:32px;font-family:'Liberation Sans', sans-serif;font-size:24.4px;font-weight:400;color:#CBCDD0;white-space:pre;">compile</div>
<svg style="position:absolute;left:106px;top:218px;" width="28" height="30" viewBox="0 0 28 30" fill="none"><path d="M12.06,3.87 A11.20,11.20 0 0 1 15.94,3.87 C17.27,4.19 17.02,7.42 18.03,7.92 C18.96,8.55 21.64,6.71 22.58,7.70 A11.20,11.20 0 0 1 24.52,11.07 C24.91,12.38 21.99,13.78 22.06,14.90 C21.99,16.02 24.91,17.42 24.52,18.73 A11.20,11.20 0 0 1 22.58,22.10 C21.64,23.09 18.96,21.25 18.03,21.88 C17.02,22.38 17.27,25.61 15.94,25.93 A11.20,11.20 0 0 1 12.06,25.93 C10.73,25.61 10.98,22.38 9.97,21.88 C9.04,21.25 6.36,23.09 5.42,22.10 A11.20,11.20 0 0 1 3.48,18.73 C3.09,17.42 6.01,16.02 5.94,14.90 C6.01,13.78 3.09,12.38 3.48,11.07 A11.20,11.20 0 0 1 5.42,7.70 C6.36,6.71 9.04,8.55 9.97,7.92 C10.98,7.42 10.73,4.19 12.06,3.87 Z" stroke="#CED0D6" stroke-width="1.8" stroke-linejoin="round" fill="none"/><circle cx="14" cy="14.9" r="3.70" stroke="#CED0D6" stroke-width="1.8" fill="none"/></svg>
<div style="position:absolute;left:139px;top:216.54px;line-height:32px;font-family:'Liberation Sans', sans-serif;font-size:24.4px;font-weight:400;color:#8C8F94;white-space:pre;">test</div>
<div style="position:absolute;left:139px;top:233.6px;width:40.5px;height:1.4px;background:#8C8F94;"></div>
<svg style="position:absolute;left:106px;top:253px;" width="28" height="30" viewBox="0 0 28 30" fill="none"><path d="M12.06,3.87 A11.20,11.20 0 0 1 15.94,3.87 C17.27,4.19 17.02,7.42 18.03,7.92 C18.96,8.55 21.64,6.71 22.58,7.70 A11.20,11.20 0 0 1 24.52,11.07 C24.91,12.38 21.99,13.78 22.06,14.90 C21.99,16.02 24.91,17.42 24.52,18.73 A11.20,11.20 0 0 1 22.58,22.10 C21.64,23.09 18.96,21.25 18.03,21.88 C17.02,22.38 17.27,25.61 15.94,25.93 A11.20,11.20 0 0 1 12.06,25.93 C10.73,25.61 10.98,22.38 9.97,21.88 C9.04,21.25 6.36,23.09 5.42,22.10 A11.20,11.20 0 0 1 3.48,18.73 C3.09,17.42 6.01,16.02 5.94,14.90 C6.01,13.78 3.09,12.38 3.48,11.07 A11.20,11.20 0 0 1 5.42,7.70 C6.36,6.71 9.04,8.55 9.97,7.92 C10.98,7.42 10.73,4.19 12.06,3.87 Z" stroke="#CED0D6" stroke-width="1.8" stroke-linejoin="round" fill="none"/><circle cx="14" cy="14.9" r="3.70" stroke="#CED0D6" stroke-width="1.8" fill="none"/></svg>
<div style="position:absolute;left:139px;top:251.54px;line-height:32px;font-family:'Liberation Sans', sans-serif;font-size:24.4px;font-weight:400;color:#CBCDD0;white-space:pre;">package</div>
<svg style="position:absolute;left:106px;top:288px;" width="28" height="30" viewBox="0 0 28 30" fill="none"><path d="M12.06,3.87 A11.20,11.20 0 0 1 15.94,3.87 C17.27,4.19 17.02,7.42 18.03,7.92 C18.96,8.55 21.64,6.71 22.58,7.70 A11.20,11.20 0 0 1 24.52,11.07 C24.91,12.38 21.99,13.78 22.06,14.90 C21.99,16.02 24.91,17.42 24.52,18.73 A11.20,11.20 0 0 1 22.58,22.10 C21.64,23.09 18.96,21.25 18.03,21.88 C17.02,22.38 17.27,25.61 15.94,25.93 A11.20,11.20 0 0 1 12.06,25.93 C10.73,25.61 10.98,22.38 9.97,21.88 C9.04,21.25 6.36,23.09 5.42,22.10 A11.20,11.20 0 0 1 3.48,18.73 C3.09,17.42 6.01,16.02 5.94,14.90 C6.01,13.78 3.09,12.38 3.48,11.07 A11.20,11.20 0 0 1 5.42,7.70 C6.36,6.71 9.04,8.55 9.97,7.92 C10.98,7.42 10.73,4.19 12.06,3.87 Z" stroke="#CED0D6" stroke-width="1.8" stroke-linejoin="round" fill="none"/><circle cx="14" cy="14.9" r="3.70" stroke="#CED0D6" stroke-width="1.8" fill="none"/></svg>
<div style="position:absolute;left:139px;top:286.54px;line-height:32px;font-family:'Liberation Sans', sans-serif;font-size:24.4px;font-weight:400;color:#CBCDD0;white-space:pre;">verify</div>
<div style="position:absolute;left:21px;top:320px;width:800px;height:35px;background:#4B6EAF;border-radius:5px;"></div>
<svg style="position:absolute;left:106px;top:323px;" width="28" height="30" viewBox="0 0 28 30" fill="none"><path d="M12.06,3.87 A11.20,11.20 0 0 1 15.94,3.87 C17.27,4.19 17.02,7.42 18.03,7.92 C18.96,8.55 21.64,6.71 22.58,7.70 A11.20,11.20 0 0 1 24.52,11.07 C24.91,12.38 21.99,13.78 22.06,14.90 C21.99,16.02 24.91,17.42 24.52,18.73 A11.20,11.20 0 0 1 22.58,22.10 C21.64,23.09 18.96,21.25 18.03,21.88 C17.02,22.38 17.27,25.61 15.94,25.93 A11.20,11.20 0 0 1 12.06,25.93 C10.73,25.61 10.98,22.38 9.97,21.88 C9.04,21.25 6.36,23.09 5.42,22.10 A11.20,11.20 0 0 1 3.48,18.73 C3.09,17.42 6.01,16.02 5.94,14.90 C6.01,13.78 3.09,12.38 3.48,11.07 A11.20,11.20 0 0 1 5.42,7.70 C6.36,6.71 9.04,8.55 9.97,7.92 C10.98,7.42 10.73,4.19 12.06,3.87 Z" stroke="#CED0D6" stroke-width="1.8" stroke-linejoin="round" fill="none"/><circle cx="14" cy="14.9" r="3.70" stroke="#CED0D6" stroke-width="1.8" fill="none"/></svg>
<div style="position:absolute;left:139px;top:321.54px;line-height:32px;font-family:'Liberation Sans', sans-serif;font-size:24.4px;font-weight:400;color:#E6E8EB;white-space:pre;">install</div>
<svg style="position:absolute;left:106px;top:358px;" width="28" height="30" viewBox="0 0 28 30" fill="none"><path d="M12.06,3.87 A11.20,11.20 0 0 1 15.94,3.87 C17.27,4.19 17.02,7.42 18.03,7.92 C18.96,8.55 21.64,6.71 22.58,7.70 A11.20,11.20 0 0 1 24.52,11.07 C24.91,12.38 21.99,13.78 22.06,14.90 C21.99,16.02 24.91,17.42 24.52,18.73 A11.20,11.20 0 0 1 22.58,22.10 C21.64,23.09 18.96,21.25 18.03,21.88 C17.02,22.38 17.27,25.61 15.94,25.93 A11.20,11.20 0 0 1 12.06,25.93 C10.73,25.61 10.98,22.38 9.97,21.88 C9.04,21.25 6.36,23.09 5.42,22.10 A11.20,11.20 0 0 1 3.48,18.73 C3.09,17.42 6.01,16.02 5.94,14.90 C6.01,13.78 3.09,12.38 3.48,11.07 A11.20,11.20 0 0 1 5.42,7.70 C6.36,6.71 9.04,8.55 9.97,7.92 C10.98,7.42 10.73,4.19 12.06,3.87 Z" stroke="#CED0D6" stroke-width="1.8" stroke-linejoin="round" fill="none"/><circle cx="14" cy="14.9" r="3.70" stroke="#CED0D6" stroke-width="1.8" fill="none"/></svg>
<div style="position:absolute;left:139px;top:356.54px;line-height:32px;font-family:'Liberation Sans', sans-serif;font-size:24.4px;font-weight:400;color:#CBCDD0;white-space:pre;">site</div>
<svg style="position:absolute;left:106px;top:393px;" width="28" height="30" viewBox="0 0 28 30" fill="none"><path d="M12.06,3.87 A11.20,11.20 0 0 1 15.94,3.87 C17.27,4.19 17.02,7.42 18.03,7.92 C18.96,8.55 21.64,6.71 22.58,7.70 A11.20,11.20 0 0 1 24.52,11.07 C24.91,12.38 21.99,13.78 22.06,14.90 C21.99,16.02 24.91,17.42 24.52,18.73 A11.20,11.20 0 0 1 22.58,22.10 C21.64,23.09 18.96,21.25 18.03,21.88 C17.02,22.38 17.27,25.61 15.94,25.93 A11.20,11.20 0 0 1 12.06,25.93 C10.73,25.61 10.98,22.38 9.97,21.88 C9.04,21.25 6.36,23.09 5.42,22.10 A11.20,11.20 0 0 1 3.48,18.73 C3.09,17.42 6.01,16.02 5.94,14.90 C6.01,13.78 3.09,12.38 3.48,11.07 A11.20,11.20 0 0 1 5.42,7.70 C6.36,6.71 9.04,8.55 9.97,7.92 C10.98,7.42 10.73,4.19 12.06,3.87 Z" stroke="#CED0D6" stroke-width="1.8" stroke-linejoin="round" fill="none"/><circle cx="14" cy="14.9" r="3.70" stroke="#CED0D6" stroke-width="1.8" fill="none"/></svg>
<div style="position:absolute;left:139px;top:391.54px;line-height:32px;font-family:'Liberation Sans', sans-serif;font-size:24.4px;font-weight:400;color:#CBCDD0;white-space:pre;">deploy</div>
</div>
<div style="position:absolute;left:6px;top:563px;width:2357px;height:2px;background:#313233;"></div>
<div style="position:absolute;left:28px;top:584.54px;line-height:32px;font-family:'Liberation Sans', sans-serif;font-size:24.4px;font-weight:400;color:#DFE1E5;white-space:pre;letter-spacing:-0.2px;-webkit-text-stroke:0.3px #DFE1E5;">Run</div>
<div style="position:absolute;left:155px;top:584.54px;line-height:32px;font-family:'Liberation Sans', sans-serif;font-size:24.4px;font-weight:400;color:#CBCDD0;white-space:pre;">governor [install]</div>
<div style="position:absolute;left:2342.3px;top:589.3px;width:3.4px;height:3.4px;background:#CED0D6;border-radius:50%;"></div>
<div style="position:absolute;left:2342.3px;top:598.3px;width:3.4px;height:3.4px;background:#CED0D6;border-radius:50%;"></div>
<div style="position:absolute;left:2342.3px;top:607.3px;width:3.4px;height:3.4px;background:#CED0D6;border-radius:50%;"></div>
<div style="position:absolute;left:6px;top:635px;width:2357px;height:1px;background:#2B2D2F;"></div>
<div style="position:absolute;left:99px;top:631px;width:290px;height:5px;background:#74787D;border-radius:2.5px;"></div>
<div style="position:absolute;left:6px;top:696px;width:2357px;height:690px;background:#3C3F41;"></div>
<div style="position:absolute;left:37px;top:696px;width:2322px;height:690px;background:#2B2B2B;"></div>
<svg style="position:absolute;left:18px;top:705px;" width="14" height="20" viewBox="0 0 14 20" fill="none"><polyline points="2.8,2.6 10.6,9.6 2.8,16.6" stroke="#AEB0B4" stroke-width="1.9" fill="none"/></svg>
<div style="position:absolute;left:61px;top:701.80px;line-height:35px;font-family:'Liberation Mono', monospace;font-size:26.67px;font-weight:400;color:#BBBBBB;white-space:pre;transform:scaleY(1.12);transform-origin:0 24.60px;">[<span style="color:#3A95D8;-webkit-text-stroke:0.45px #3A95D8">INFO</span>] com.primeton.esb.governor.sam.tools.dataexportor ... <span style="color:#5C9E2E;-webkit-text-stroke:0.45px #5C9E2E">SUCCESS</span> [  3.756 s]</div>
<div style="position:absolute;left:61px;top:747.26px;line-height:35px;font-family:'Liberation Mono', monospace;font-size:26.67px;font-weight:400;color:#BBBBBB;white-space:pre;transform:scaleY(1.12);transform-origin:0 24.60px;">[<span style="color:#3A95D8;-webkit-text-stroke:0.45px #3A95D8">INFO</span>] com.primeton.esb.governor.sam.tools.policy ......... <span style="color:#5C9E2E;-webkit-text-stroke:0.45px #5C9E2E">SUCCESS</span> [  3.638 s]</div>
<div style="position:absolute;left:61px;top:792.72px;line-height:35px;font-family:'Liberation Mono', monospace;font-size:26.67px;font-weight:400;color:#BBBBBB;white-space:pre;transform:scaleY(1.12);transform-origin:0 24.60px;">[<span style="color:#3A95D8;-webkit-text-stroke:0.45px #3A95D8">INFO</span>] com.primeton.esb.governor.sam.tools.jsonschema ..... <span style="color:#5C9E2E;-webkit-text-stroke:0.45px #5C9E2E">SUCCESS</span> [  3.647 s]</div>
<div style="position:absolute;left:61px;top:838.18px;line-height:35px;font-family:'Liberation Mono', monospace;font-size:26.67px;font-weight:400;color:#BBBBBB;white-space:pre;transform:scaleY(1.12);transform-origin:0 24.60px;">[<span style="color:#3A95D8;-webkit-text-stroke:0.45px #3A95D8">INFO</span>] com.primeton.esb.governor.sam.tools.dataupdater .... <span style="color:#5C9E2E;-webkit-text-stroke:0.45px #5C9E2E">SUCCESS</span> [  5.913 s]</div>
<div style="position:absolute;left:61px;top:883.64px;line-height:35px;font-family:'Liberation Mono', monospace;font-size:26.67px;font-weight:400;color:#BBBBBB;white-space:pre;transform:scaleY(1.12);transform-origin:0 24.60px;">[<span style="color:#3A95D8;-webkit-text-stroke:0.45px #3A95D8">INFO</span>] com.primeton.eos.governor.esbdasentity ............. <span style="color:#5C9E2E;-webkit-text-stroke:0.45px #5C9E2E">SUCCESS</span> [ 22.005 s]</div>
<div style="position:absolute;left:61px;top:929.10px;line-height:35px;font-family:'Liberation Mono', monospace;font-size:26.67px;font-weight:400;color:#BBBBBB;white-space:pre;transform:scaleY(1.12);transform-origin:0 24.60px;">[<span style="color:#3A95D8;-webkit-text-stroke:0.45px #3A95D8">INFO</span>] com.primeton.esb.governor.esbafcboot ............... <span style="color:#5C9E2E;-webkit-text-stroke:0.45px #5C9E2E">SUCCESS</span> [ 40.983 s]</div>
<div style="position:absolute;left:61px;top:974.56px;line-height:35px;font-family:'Liberation Mono', monospace;font-size:26.67px;font-weight:400;color:#BBBBBB;white-space:pre;transform:scaleY(1.12);transform-origin:0 24.60px;">[<span style="color:#3A95D8;-webkit-text-stroke:0.45px #3A95D8">INFO</span>] ------------------------------------------------------------------------</div>
<div style="position:absolute;left:61px;top:1020.02px;line-height:35px;font-family:'Liberation Mono', monospace;font-size:26.67px;font-weight:400;color:#BBBBBB;white-space:pre;transform:scaleY(1.12);transform-origin:0 24.60px;">[<span style="color:#3A95D8;-webkit-text-stroke:0.45px #3A95D8">INFO</span>] <span style="color:#5C9E2E;-webkit-text-stroke:0.45px #5C9E2E">BUILD SUCCESS</span></div>
<div style="position:absolute;left:61px;top:1065.48px;line-height:35px;font-family:'Liberation Mono', monospace;font-size:26.67px;font-weight:400;color:#BBBBBB;white-space:pre;transform:scaleY(1.12);transform-origin:0 24.60px;">[<span style="color:#3A95D8;-webkit-text-stroke:0.45px #3A95D8">INFO</span>] ------------------------------------------------------------------------</div>
<div style="position:absolute;left:61px;top:1110.94px;line-height:35px;font-family:'Liberation Mono', monospace;font-size:26.67px;font-weight:400;color:#BBBBBB;white-space:pre;transform:scaleY(1.12);transform-origin:0 24.60px;">[<span style="color:#3A95D8;-webkit-text-stroke:0.45px #3A95D8">INFO</span>] Total time:  05:10 min</div>
<div style="position:absolute;left:61px;top:1156.40px;line-height:35px;font-family:'Liberation Mono', monospace;font-size:26.67px;font-weight:400;color:#BBBBBB;white-space:pre;transform:scaleY(1.12);transform-origin:0 24.60px;">[<span style="color:#3A95D8;-webkit-text-stroke:0.45px #3A95D8">INFO</span>] Finished at: 2025-10-11T11:41:08+08:00</div>
<div style="position:absolute;left:61px;top:1201.86px;line-height:35px;font-family:'Liberation Mono', monospace;font-size:26.67px;font-weight:400;color:#BBBBBB;white-space:pre;transform:scaleY(1.12);transform-origin:0 24.60px;">[<span style="color:#3A95D8;-webkit-text-stroke:0.45px #3A95D8">INFO</span>] ------------------------------------------------------------------------</div>
<div style="position:absolute;left:61px;top:1292.78px;line-height:35px;font-family:'Liberation Mono', monospace;font-size:26.67px;font-weight:400;color:#BBBBBB;white-space:pre;transform:scaleY(1.12);transform-origin:0 24.60px;">Process finished with exit code 0</div>
<div style="position:absolute;left:38px;top:1001px;width:426px;height:67px;border:7px solid #FA5252;border-radius:5px;"></div>
<div style="position:absolute;left:2344px;top:1352px;width:14px;height:34px;background:#4C4C4C;"></div>
<div style="position:absolute;left:2359px;top:696px;width:4px;height:690px;background:#3C3F41;"></div>
<div style="position:absolute;left:63px;top:1384px;width:1020px;height:2px;background:#4C4C4C;"></div>
<svg style="position:absolute;left:0;top:0" width="2363" height="1386" viewBox="0 0 2363 1386" fill="none"><line x1="1434.8" y1="33.8" x2="1447.6" y2="46" stroke="#767A7E" stroke-width="1.6"/><line x1="1447.6" y1="33.8" x2="1434.8" y2="46" stroke="#767A7E" stroke-width="1.6"/><path d="M1420,89.5 Q1421.2,89.5 1422,90.8 L1430.2,105 Q1431,106.8 1429,106.8 L1411,106.8 Q1409,106.8 1409.8,105 L1418,90.8 Q1418.8,89.5 1420,89.5 Z" fill="#D3A52B" stroke="#D3A52B" stroke-width="1.4" stroke-linejoin="round"/><rect x="1418.8" y="94" width="2.4" height="7" rx="1" fill="#2B2B2B"/><circle cx="1420" cy="103.6" r="1.3" fill="#2B2B2B"/><polyline points="1461,97.6 1467.6,103.6 1479.8,90.4" stroke="#5FA764" stroke-width="2.8" fill="none" stroke-linecap="round" stroke-linejoin="round"/><polyline points="1460.6,110.2 1463.8,106.8 1467,110.2 1470.2,106.8 1473.4,110.2 1476.6,106.8 1479.2,109.6" stroke="#5FA764" stroke-width="1.3" fill="none"/><polyline points="1516.3,103 1523.1,95.6 1529.9,103" stroke="#AEB0B4" stroke-width="1.7" fill="none"/><polyline points="1553.1,95.6 1559.9,102.6 1566.7,95.6" stroke="#AEB0B4" stroke-width="1.7" fill="none"/><path d="M1623.9,98.3 A9.7,9.7 0 0 0 1608.3,106.5" stroke="#DFE1E5" stroke-width="1.8" fill="none"/><polyline points="1604.1,105.2 1608.3,109.4 1612.5,105.2" stroke="#DFE1E5" stroke-width="1.8" fill="none"/><path d="M1612.1,114.2 A9.7,9.7 0 0 0 1627.7,105.5" stroke="#DFE1E5" stroke-width="1.8" fill="none"/><polyline points="1623.5,107 1627.7,102.8 1631.9,107" stroke="#DFE1E5" stroke-width="1.8" fill="none"/><path d="M1661.7,116.1 L1654,116.1 Q1651.4,116.1 1651.4,113.5 L1651.4,98.5 Q1651.4,95.9 1654,95.9 L1659.8,95.9 Q1661,95.9 1662,97 L1663.5,99 Q1664.3,99.9 1665.5,99.9 L1672.2,99.9 Q1674.8,99.9 1674.8,102.5 L1674.8,105.3" stroke="#DFE1E5" stroke-width="1.8" fill="none" stroke-linejoin="round"/><path d="M1676.2,111.5 A6.4,6.4 0 0 0 1665.5,108.2" stroke="#548AF7" stroke-width="1.9" fill="none"/><polygon points="1662.8,106 1668.3,106.2 1663.2,111.4" fill="#548AF7"/><path d="M1663.6,114 A6.4,6.4 0 0 0 1674.3,117.6" stroke="#548AF7" stroke-width="1.9" fill="none"/><polygon points="1677.3,120 1671.8,119.8 1676.9,114.6" fill="#548AF7"/><line x1="1709.1" y1="95.5" x2="1709.1" y2="110" stroke="#DFE1E5" stroke-width="1.8"/><polyline points="1704,105.5 1709.1,110.5 1714.3,105.5" stroke="#DFE1E5" stroke-width="1.8" fill="none"/><polyline points="1699.1,109.8 1699.1,115.8 1718.8,115.8 1718.8,109.8" stroke="#DFE1E5" stroke-width="1.8" fill="none" stroke-linejoin="round"/><polygon points="1723.9,115.2 1723.9,122 1717.2,122" fill="#DFE1E5"/><rect x="1736.1" y="89.4" width="1.8" height="34.6" fill="#4C4D50"/><rect x="1794.1" y="89.4" width="1.8" height="34.6" fill="#4C4D50"/><rect x="2034.1" y="89.4" width="1.8" height="34.6" fill="#4C4D50"/><rect x="2091" y="89.4" width="1.8" height="34.6" fill="#4C4D50"/><line x1="1765" y1="93.9" x2="1765" y2="116.1" stroke="#DFE1E5" stroke-width="1.8"/><line x1="1753.9" y1="105.2" x2="1776.1" y2="105.2" stroke="#DFE1E5" stroke-width="1.8"/><path d="M1815.8,96.5 Q1815.8,94.6 1817.5,95.6 L1833.5,104.6 Q1835,105.6 1833.5,106.6 L1817.5,116.6 Q1815.8,117.6 1815.8,115.6 Z" stroke="#4FA055" stroke-width="2" fill="#1F2E22" stroke-linejoin="round"/><rect x="1859.2" y="96.2" width="22.2" height="20.2" rx="3.8" stroke="#DFE1E5" stroke-width="1.8" fill="none"/><line x1="1859.2" y1="101.6" x2="1881.4" y2="101.6" stroke="#DFE1E5" stroke-width="1.8"/><path d="M1864,105.2 L1870.6,108.6 L1864,112.2 Z" stroke="#DFE1E5" stroke-width="1.7" fill="none" stroke-linejoin="round"/><path d="M1911,114.1 L1908.2,114.1 A5.8,5.8 0 0 1 1906.5,102.8 A8.3,8.3 0 0 1 1922.3,100 A5.6,5.6 0 0 1 1925.8,112.3" stroke="#DFE1E5" stroke-width="1.8" fill="none" stroke-linecap="round"/><line x1="1903.2" y1="94.3" x2="1926.3" y2="117.4" stroke="#DFE1E5" stroke-width="1.8"/><circle cx="1961" cy="105.9" r="11.6" stroke="#DFE1E5" stroke-width="1.8" fill="none"/><line x1="1953.3" y1="113.6" x2="1968.7" y2="98.2" stroke="#DFE1E5" stroke-width="1.8"/><polyline points="1999,96 2006,103 2013,96" stroke="#DFE1E5" stroke-width="1.8" fill="none"/><polyline points="1999,116.3 2006,109.3 2013,116.3" stroke="#DFE1E5" stroke-width="1.8" fill="none"/><path d="M2054.4,107.5 A8.8,8.8 0 1 1 2062.2,113" stroke="#DFE1E5" stroke-width="1.8" fill="none"/><line x1="2067.6" y1="110.2" x2="2073.8" y2="116" stroke="#DFE1E5" stroke-width="1.8"/><line x1="2052.4" y1="110.8" x2="2052.4" y2="118" stroke="#548AF7" stroke-width="1.9" stroke-linecap="round"/><line x1="2056.5" y1="108.2" x2="2056.5" y2="118" stroke="#548AF7" stroke-width="1.9" stroke-linecap="round"/><line x1="2060.7" y1="111.8" x2="2060.7" y2="118" stroke="#548AF7" stroke-width="1.9" stroke-linecap="round"/><path d="M2119.89,95.07 A11.00,11.00 0 0 1 2123.71,95.07 C2125.02,95.38 2124.77,98.56 2125.76,99.04 C2126.68,99.66 2129.30,97.86 2130.23,98.83 A11.00,11.00 0 0 1 2132.14,102.14 C2132.52,103.43 2129.64,104.80 2129.72,105.90 C2129.64,107.00 2132.52,108.37 2132.14,109.66 A11.00,11.00 0 0 1 2130.23,112.97 C2129.30,113.94 2126.68,112.14 2125.76,112.76 C2124.77,113.24 2125.02,116.42 2123.71,116.73 A11.00,11.00 0 0 1 2119.89,116.73 C2118.58,116.42 2118.83,113.24 2117.84,112.76 C2116.92,112.14 2114.30,113.94 2113.37,112.97 A11.00,11.00 0 0 1 2111.46,109.66 C2111.08,108.37 2113.96,107.00 2113.88,105.90 C2113.96,104.80 2111.08,103.43 2111.46,102.14 A11.00,11.00 0 0 1 2113.37,98.83 C2114.30,97.86 2116.92,99.66 2117.84,99.04 C2118.83,98.56 2118.58,95.38 2119.89,95.07 Z" stroke="#DFE1E5" stroke-width="1.8" stroke-linejoin="round" fill="none"/><circle cx="2121.8" cy="105.9" r="3.60" stroke="#DFE1E5" stroke-width="1.8" fill="none"/><polygon points="2137.3,115 2137.3,122 2130.3,122" fill="#DFE1E5"/><path d="M1627.60,205.00 L1631.00,188.00 M1630.40,191.60 Q1633.00,187.60 1637.40,187.80 Q1641.20,188.30 1640.20,192.50 L1637.50,205.00 M1640.00,191.60 Q1642.60,187.60 1647.00,187.80 Q1650.80,188.30 1649.80,192.50 L1647.10,205.00" stroke="#548AF7" stroke-width="2.9" fill="none"/><path d="M122.80,609.00 L126.20,592.00 M125.60,595.60 Q128.20,591.60 132.60,591.80 Q136.40,592.30 135.40,596.50 L132.70,609.00 M135.20,595.60 Q137.80,591.60 142.20,591.80 Q146.00,592.30 145.00,596.50 L142.30,609.00" stroke="#4A6CAE" stroke-width="2.9" fill="none"/><line x1="357.3" y1="598" x2="368.9" y2="609.4" stroke="#7A7E82" stroke-width="1.6"/><line x1="368.9" y1="598" x2="357.3" y2="609.4" stroke="#7A7E82" stroke-width="1.6"/><path d="M26.8,676.3 A10.3,10.3 0 1 1 34.7,659.4" stroke="#DFE1E5" stroke-width="1.8" fill="none"/><polyline points="37,654 37,662.2 29,662.2" stroke="#DFE1E5" stroke-width="1.8" fill="none"/><path d="M30,667.6 Q30,666.6 31,667.1 L40,672 Q41,672.8 40,673.6 L31,678.8 Q30,679.3 30,678.3 Z" stroke="#4FA055" stroke-width="2" fill="#1F2E22" stroke-linejoin="round"/><path d="M70.9,656.6 A10.7,10.7 0 0 0 66.4,673.8" stroke="#DFE1E5" stroke-width="1.8" fill="none"/><polyline points="67.9,669.5 67.9,675.8 61.5,675.8" stroke="#DFE1E5" stroke-width="1.8" fill="none"/><path d="M82.4,666.8 A11,11 0 0 0 76.3,657" stroke="#DFE1E5" stroke-width="1.8" fill="none"/><polyline points="75.5,662.2 75.5,655.7 82,655.7" stroke="#DFE1E5" stroke-width="1.8" fill="none"/><path d="M75,667.6 Q75,666.6 76,667.1 L85,672 Q86,672.8 85,673.6 L76,678.8 Q75,679.3 75,678.3 Z" stroke="#4FA055" stroke-width="2" fill="#1F2E22" stroke-linejoin="round"/><path d="M120.1,676.3 A10.3,10.3 0 1 1 128,659.4" stroke="#5B5D60" stroke-width="1.8" fill="none"/><polyline points="130.3,654 130.3,662.2 122.3,662.2" stroke="#5B5D60" stroke-width="1.8" fill="none"/><circle cx="127.9" cy="672" r="6.2" fill="#5B5D60"/><rect x="154.7" y="655.7" width="20.6" height="20.5" rx="3.5" fill="#58595B"/><path d="M197.5,665.9 Q210.9,649 224.5,665.9 Q210.9,682.8 197.5,665.9 Z" stroke="#DFE1E5" stroke-width="1.8" fill="none" stroke-linejoin="round"/><circle cx="210.9" cy="665.9" r="4.5" stroke="#DFE1E5" stroke-width="1.8" fill="none"/><polygon points="226.2,675 226.2,682 219.2,682" fill="#DFE1E5"/><rect x="238.2" y="649" width="1.8" height="35" fill="#4C4D50"/><path d="M257,662 Q257,659.8 259.2,659.8 L262.5,659.8 L264.3,656.2 L271.5,656.2 L273.3,659.8 L276.8,659.8 Q279,659.8 279,662 L279,674 Q279,676.2 276.8,676.2 L259.2,676.2 Q257,676.2 257,674 Z" stroke="#5B5D60" stroke-width="1.8" fill="none" stroke-linejoin="round"/><circle cx="267.8" cy="667.3" r="4.6" stroke="#5B5D60" stroke-width="1.8" fill="none"/><circle cx="275.6" cy="663.3" r="1" fill="#5B5D60"/><path d="M307.6,662 L307.6,657 Q307.6,654.6 310,654.6 L323,654.6 Q325.4,654.6 325.4,657 L325.4,674.8 Q325.4,677.2 323,677.2 L310,677.2 Q307.6,677.2 307.6,674.8 L307.6,670" stroke="#5B5D60" stroke-width="1.8" fill="none"/><line x1="304" y1="666" x2="319.6" y2="666" stroke="#5B5D60" stroke-width="1.8"/><polyline points="314.6,661 319.6,666 314.6,671" stroke="#5B5D60" stroke-width="1.8" fill="none"/><circle cx="358.8" cy="657.3" r="2" fill="#DFE1E5"/><circle cx="358.8" cy="666" r="2" fill="#DFE1E5"/><circle cx="358.8" cy="674.7" r="2" fill="#DFE1E5"/></svg>
</body></html>
